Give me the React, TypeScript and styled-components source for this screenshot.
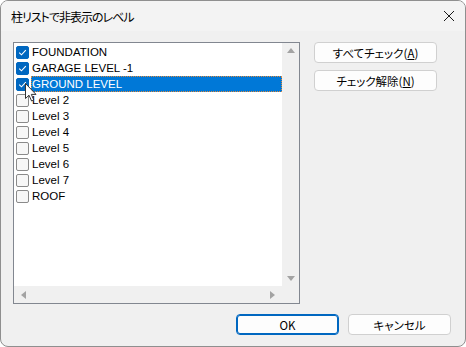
import React from "react";
import styled, { createGlobalStyle } from "styled-components";

const Global = createGlobalStyle`
  html, body { margin: 0; padding: 0; background: #ffffff; }
  body { width: 466px; height: 347px; overflow: hidden; }
  * { box-sizing: border-box; }
`;

const FONT = `"Noto Sans CJK JP", "Liberation Sans", sans-serif`;
const LATIN = `"Liberation Sans", "Noto Sans CJK JP", sans-serif`;

const Window = styled.div`
  width: 466px;
  height: 347px;
  border: 1px solid #8f8f8f;
  border-radius: 8px;
  overflow: hidden;
  display: flex;
  flex-direction: column;
  background: #f0f0f0;
  font-family: ${FONT};
  font-feature-settings: "palt";
  color: #000;
`;

const TitleBar = styled.div`
  height: 30px;
  flex: none;
  display: flex;
  align-items: center;
  justify-content: space-between;
  padding: 0 9px 0 10px;
  background: #f3f3f3;
`;

const Title = styled.div`
  font-size: 12px;
  letter-spacing: -1px;
  padding-top: 1px;
`;

const CloseBtn = styled.div`
  width: 12px;
  height: 12px;
  display: flex;
  margin-right: 1px;
`;

const Body = styled.div`
  flex: 1;
  display: flex;
  flex-direction: column;
  padding: 11px 14px 11px 12px;
`;

const Main = styled.div`
  display: flex;
  gap: 14px;
`;

const ListBox = styled.div`
  position: relative;
  width: 287px;
  height: 262px;
  border: 1px solid #828790;
  background: #ffffff;
  display: grid;
  grid-template-columns: 1fr 17px;
  grid-template-rows: 1fr 17px;
`;

const Rows = styled.div`
  padding-top: 1px;
  display: flex;
  flex-direction: column;
`;

const Row = styled.div`
  height: 16px;
  display: flex;
  align-items: center;
  padding-left: 2px;
`;

const Check = styled.div<{ $on: boolean }>`
  width: 13px;
  height: 13px;
  flex: none;
  border-radius: 2px;
  border: 1px solid ${(p) => (p.$on ? "#0067c0" : "#8a8a8a")};
  background: ${(p) => (p.$on ? "#0067c0" : "#f7f7f7")};
  display: flex;
  align-items: center;
  justify-content: center;
`;

const Label = styled.div<{ $sel: boolean }>`
  margin-left: 2px;
  flex: 1;
  height: 16px;
  line-height: 16px;
  padding-left: 1px;
  font-family: ${LATIN};
  font-size: 11.5px;
  color: ${(p) => (p.$sel ? "#ffffff" : "#000000")};
  background: ${(p) => (p.$sel ? "#0078d7" : "transparent")};
  outline: ${(p) => (p.$sel ? "1px dotted #e08a3c" : "none")};
  outline-offset: -1px;
`;

const VScroll = styled.div`
  background: #f0f0f0;
  display: flex;
  flex-direction: column;
  justify-content: space-between;
  align-items: center;
  padding: 4px 0;
`;

const HScroll = styled.div`
  background: #f0f0f0;
  display: flex;
  justify-content: space-between;
  align-items: center;
  padding: 0 6px;
`;

const Corner = styled.div`
  background: #f0f0f0;
`;

const Side = styled.div`
  display: flex;
  flex-direction: column;
  gap: 7px;
`;

const Button = styled.button<{ $w: number; $default?: boolean }>`
  width: ${(p) => p.$w}px;
  height: 21px;
  padding: 0;
  border-radius: 4px;
  border: ${(p) => (p.$default ? "1px solid #0067c0" : "1px solid #d0d0d0")};
  box-shadow: ${(p) => (p.$default ? "inset 0 0 0 1px #0067c0" : "none")};
  background: #fdfdfd;
  font-family: ${FONT};
  font-feature-settings: "palt";
  font-size: 11.5px;
  color: #000;
  display: flex;
  align-items: center;
  justify-content: center;
`;

const U = styled.span`
  text-decoration: underline;
`;

const Footer = styled.div`
  margin-top: auto;
  display: flex;
  justify-content: flex-end;
  gap: 9px;
`;

const Cursor = styled.svg`
  position: absolute;
  left: 11px;
  top: 40px;
`;

const items = [
  { name: "FOUNDATION", on: true },
  { name: "GARAGE LEVEL -1", on: true },
  { name: "GROUND LEVEL", on: true, sel: true },
  { name: "Level 2", on: false },
  { name: "Level 3", on: false },
  { name: "Level 4", on: false },
  { name: "Level 5", on: false },
  { name: "Level 6", on: false },
  { name: "Level 7", on: false },
  { name: "ROOF", on: false },
];

const Tick = () => (
  <svg width="9" height="9" viewBox="0 0 9 9">
    <path d="M1.2 4.6 L3.5 6.8 L7.8 2.2" fill="none" stroke="#ffffff" strokeWidth="1.1" />
  </svg>
);

const Tri = ({ dir }: { dir: "up" | "down" | "left" | "right" }) => {
  const d =
    dir === "up"
      ? "M0 6 L4 1 L8 6 Z"
      : dir === "down"
      ? "M0 2 L8 2 L4 7 Z"
      : dir === "left"
      ? "M6 0 L6 8 L1 4 Z"
      : "M2 0 L7 4 L2 8 Z";
  return (
    <svg width="8" height="8" viewBox="0 0 8 8">
      <path d={d} fill="#a3a3a3" />
    </svg>
  );
};

export default function App() {
  return (
    <>
      <Global />
      <Window>
        <TitleBar>
          <Title>柱リストで非表示のレベル</Title>
          <CloseBtn>
            <svg width="12" height="12" viewBox="0 0 12 12">
              <path d="M1 1 L11 11 M11 1 L1 11" stroke="#1a1a1a" strokeWidth="1" />
            </svg>
          </CloseBtn>
        </TitleBar>
        <Body>
          <Main>
            <ListBox>
              <Rows>
                {items.map((it) => (
                  <Row key={it.name}>
                    <Check $on={it.on}>{it.on && <Tick />}</Check>
                    <Label $sel={!!it.sel}>{it.name}</Label>
                  </Row>
                ))}
              </Rows>
              <VScroll>
                <Tri dir="up" />
                <Tri dir="down" />
              </VScroll>
              <HScroll>
                <Tri dir="left" />
                <Tri dir="right" />
              </HScroll>
              <Corner />
              <Cursor width="12" height="19" viewBox="0 0 12 19">
                <path
                  d="M0.5 0.5 L0.5 15.5 L4 12.2 L6.6 18 L8.8 17 L6.3 11.4 L11 11.4 Z"
                  fill="#ffffff"
                  stroke="#333333"
                  strokeWidth="1"
                  strokeLinejoin="round"
                />
              </Cursor>
            </ListBox>
            <Side>
              <Button $w={123}>
                すべてチェック(<U>A</U>)
              </Button>
              <Button $w={123}>
                チェック解除(<U>N</U>)
              </Button>
            </Side>
          </Main>
          <Footer>
            <Button $w={103} $default>
              OK
            </Button>
            <Button $w={103}>キャンセル</Button>
          </Footer>
        </Body>
      </Window>
    </>
  );
}
